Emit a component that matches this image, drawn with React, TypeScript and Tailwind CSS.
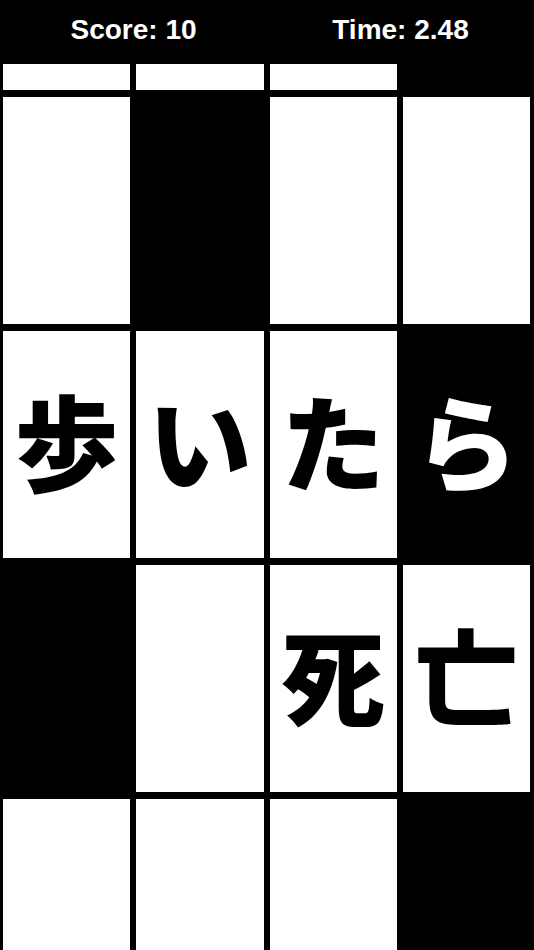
const rows: { dark: boolean[]; chars: string[] }[] = [
  { dark: [false, true, false, false], chars: ['', '', '', ''] },
  { dark: [false, false, false, true], chars: ['歩', 'い', 'た', 'ら'] },
  { dark: [true, false, false, false], chars: ['', '', '死', '亡'] },
  { dark: [false, false, false, true], chars: ['', '', '', ''] },
]

function Tile({ dark, char }: { dark: boolean; char: string }) {
  return (
    <div
      className={
        'flex items-center justify-center h-full pb-[12px] ' +
        (dark ? 'bg-black text-white' : 'bg-white text-black')
      }
    >
      <span
        className="text-[104px] leading-none font-black"
        style={{ fontFamily: '"Noto Sans CJK JP", sans-serif' }}
      >
        {char}
      </span>
    </div>
  )
}

export default function App() {
  return (
    <div className="w-[534px] h-[950px] bg-black overflow-hidden flex flex-col">
      {/* Header */}
      <header
        className="h-[58px] shrink-0 flex items-center text-white font-bold text-[28px] pt-[1px]"
        style={{ fontFamily: '"Liberation Sans", Arial, sans-serif' }}
      >
        <div className="flex-1 text-center">Score: 10</div>
        <div className="flex-1 text-center">Time: 2.48</div>
      </header>

      {/* Partial row sliding in */}
      <div className="grid grid-cols-4 gap-[6px] pl-[3px] pr-[4px] mt-[6px] h-[26px] shrink-0">
        <div className="bg-white" />
        <div className="bg-white" />
        <div className="bg-white" />
        <div className="bg-black" />
      </div>

      {/* Board */}
      <div className="flex flex-col gap-[7px] mt-[7px] shrink-0">
        {rows.map((row, i) => (
          <div key={i} className="grid grid-cols-4 gap-[6px] pl-[3px] pr-[4px] h-[227px] shrink-0">
            {row.dark.map((d, j) => (
              <Tile key={j} dark={d} char={row.chars[j]} />
            ))}
          </div>
        ))}
      </div>
    </div>
  )
}
